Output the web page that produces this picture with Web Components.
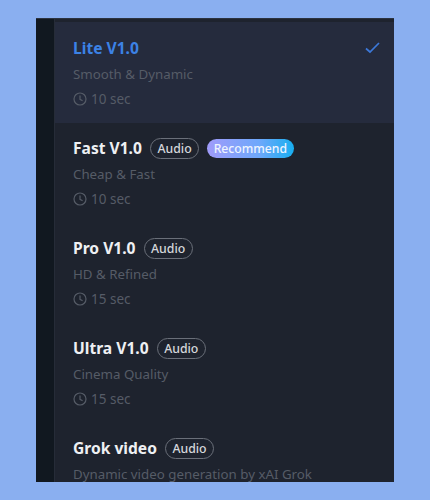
<!DOCTYPE html>
<html>
<head>
<meta charset="utf-8">
<title>Models</title>
<style>
    html, body { margin: 0; padding: 0; }
    body { background: #8aaff0; font-family: "Noto Sans", "Liberation Sans", sans-serif; }
</style>
</head>
<body>
<model-panel>
    <model-row name="Lite V1.0" desc="Smooth &amp; Dynamic" time="10 sec" selected></model-row>
    <model-row name="Fast V1.0" desc="Cheap &amp; Fast" time="10 sec" audio recommend></model-row>
    <model-row name="Pro V1.0" desc="HD &amp; Refined" time="15 sec" audio></model-row>
    <model-row name="Ultra V1.0" desc="Cinema Quality" time="15 sec" audio></model-row>
    <model-row name="Grok video" desc="Dynamic video generation by xAI Grok" audio></model-row>
</model-panel>
<script>
class ModelPanel extends HTMLElement {
    constructor() {
        super();
        this.attachShadow({mode: 'open'});
        this.shadowRoot.innerHTML = `
            <style>
                :host {
                    display: flex;
                    width: 358px;
                    height: 464px;
                    margin: 18px 0 0 36px;
                    overflow: hidden;
                    background: #1e232e;
                    border-top: 1px solid #2c3340;
                    box-sizing: border-box;
                }
                .rail {
                    width: 18px;
                    flex: none;
                    background: #111820;
                    border-right: 1px solid #262c38;
                }
                .list {
                    flex: 1;
                    min-width: 0;
                    padding-top: 3px;
                }
            </style>
            <div class="rail"></div>
            <div class="list"><slot></slot></div>
        `;
    }
}

class ModelRow extends HTMLElement {
    constructor() {
        super();
        this.attachShadow({mode: 'open'});
    }
    getStyles() {
        return `
            <style>
                :host {
                    display: block;
                    height: 100px;
                    box-sizing: border-box;
                    padding: 14px 14px 0 18px;
                }
                :host([selected]) {
                    background: #252b3d;
                    height: 101px;
                    padding-top: 15px;
                }
                .head {
                    display: flex;
                    align-items: center;
                    height: 22px;
                }
                .name {
                    font-size: 15.6px;
                    font-weight: 700;
                    color: #eef0f3;
                    white-space: nowrap;
                }
                :host([selected]) .name { color: #3c82e6; }
                .audio {
                    margin-left: 8px;
                    height: 21px;
                    padding: 0 6.5px;
                    box-sizing: border-box;
                    display: flex;
                    align-items: center;
                    border: 1px solid #6a6f79;
                    border-radius: 11px;
                    font-size: 12.3px;
                    font-weight: 500;
                    color: #d5d7db;
                }
                .rec {
                    margin-left: 8px;
                    height: 19px;
                    padding: 0 6.5px;
                    display: flex;
                    align-items: center;
                    border-radius: 10px;
                    font-size: 12.2px;
                    font-weight: 500;
                    color: #eef4ff;
                    background: linear-gradient(90deg, #a09bfa, #6ea8fb 60%, #18aef0);
                }
                .check { margin-left: auto; display: block; }
                .desc {
                    margin-top: 5px;
                    height: 20px;
                    line-height: 20px;
                    font-size: 13.3px;
                    color: #565c67;
                    white-space: nowrap;
                }
                .time {
                    margin-top: 4.5px;
                    display: flex;
                    align-items: center;
                    gap: 4px;
                    height: 20px;
                    font-size: 13.5px;
                    color: #565c67;
                }
                :host([selected]) .time { margin-top: 5px; }
                svg { flex: none; }
            </style>
        `;
    }
    render() {
        const audio = this.hasAttribute('audio') ? '<span class="audio">Audio</span>' : '';
        const rec = this.hasAttribute('recommend') ? '<span class="rec">Recommend</span>' : '';
        const check = this.hasAttribute('selected') ? `
            <svg class="check" width="15" height="12" viewBox="0 0 15 12" fill="none" stroke="#3c78d8" stroke-width="1.7">
                <path d="M1 6.5 L5 10 L14 1"/>
            </svg>` : '';
        const time = this.hasAttribute('time') ? `
            <div class="time">
                <svg width="14" height="14" viewBox="0 0 14 14" fill="none" stroke="#565c67" stroke-width="1.2">
                    <circle cx="7" cy="7" r="6"/>
                    <path d="M7 3.5 V7.4 L9.6 8.8"/>
                </svg>
                <span>${this.getAttribute('time')}</span>
            </div>` : '';
        this.shadowRoot.innerHTML = `
            ${this.getStyles()}
            <div class="head">
                <span class="name">${this.getAttribute('name')}</span>${audio}${rec}${check}
            </div>
            <div class="desc">${this.getAttribute('desc').replace('&', '&amp;')}</div>
            ${time}
        `;
    }
    connectedCallback() {
        this.render();
    }
}

customElements.define('model-panel', ModelPanel);
customElements.define('model-row', ModelRow);
</script>
</body>
</html>
